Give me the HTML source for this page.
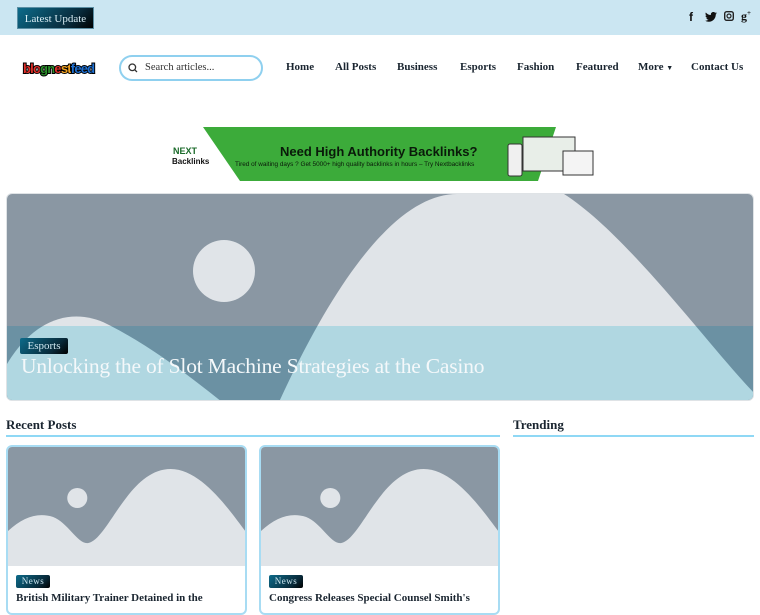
<!DOCTYPE html>
<html><head><meta charset="utf-8"><style>
*{margin:0;padding:0;box-sizing:border-box}
body{width:760px;height:600px;overflow:hidden;background:#fff;font-family:"Liberation Serif","DejaVu Serif",serif;color:#1a2530;position:relative}
.top{position:absolute;left:0;top:0;width:760px;height:35px;background:#cbe6f2}
.lu{position:absolute;left:17px;top:7px;width:77px;height:22px;background:linear-gradient(135deg,#0d6b8a,#082a3a 70%,#000);color:#d9eef5;font-size:11px;line-height:22px;text-align:center;border:1px solid #5a8ea3}
.soc{position:absolute;top:10px;font-size:12px;font-weight:bold;color:#111}
.logo{position:absolute;left:23px;top:61px;font-family:"Liberation Sans",sans-serif;font-weight:bold;font-size:13px;letter-spacing:-0.8px;-webkit-text-stroke:2px #000;paint-order:stroke fill}
.search{position:absolute;left:119px;top:55px;width:144px;height:26px;border:2px solid #8fd0ef;border-radius:13px;font-size:10.5px;color:#333;padding-left:24px;line-height:22px}
.nav{position:absolute;top:61px;font-size:11px;font-weight:bold;color:#1a2530}
.ad{position:absolute;left:168px;top:127px;width:428px;height:56px}
.hero{position:absolute;left:6px;top:193px;width:748px;height:208px;border-radius:6px;overflow:hidden;border:1px solid #dfe3e6}
.tag{position:absolute;background:linear-gradient(135deg,#0d6b8a,#082a3a 70%,#000);color:#cfe8f1;border-radius:2px;text-align:center}
.h{position:absolute;font-size:13px;font-weight:bold}
.line{position:absolute;height:2px;background:#8fd8f5}
.card{position:absolute;top:445px;width:241px;height:170px;border:2px solid #a8dcf3;border-radius:6px;overflow:hidden}
.ct{position:absolute;left:8px;top:145px;font-size:11px;font-weight:bold;white-space:nowrap}
</style></head><body>
<div class="top"></div>
<div class="lu">Latest Update</div>
<div class="soc" style="left:689px;font-family:'Liberation Sans',sans-serif">f</div>
<svg style="position:absolute;left:705px;top:12px" width="12" height="10" viewBox="0 0 24 20"><path d="M24 2.4a10 10 0 0 1-2.8.8A5 5 0 0 0 23.3.4a10 10 0 0 1-3.1 1.2A4.9 4.9 0 0 0 11.8 6 14 14 0 0 1 1.7.9a4.9 4.9 0 0 0 1.5 6.6A5 5 0 0 1 1 6.9 4.9 4.9 0 0 0 4.9 11.8a5 5 0 0 1-2.2.1 4.9 4.9 0 0 0 4.6 3.4A9.9 9.9 0 0 1 0 17.3 14 14 0 0 0 7.5 19.5c9 0 14-7.5 14-14v-.6A10 10 0 0 0 24 2.4z" fill="#111"/></svg>
<svg style="position:absolute;left:724px;top:11px" width="10" height="10" viewBox="0 0 10 10"><rect x="0.7" y="0.7" width="8.6" height="8.6" rx="2" fill="none" stroke="#222" stroke-width="1.4"/><circle cx="5" cy="5" r="2" fill="none" stroke="#222" stroke-width="1.2"/></svg>
<div class="soc" style="left:741px;top:9px;font-size:12px">g<sup style="font-size:7px">+</sup></div>

<div class="logo"><span style="color:#e0302a">blo</span><span style="color:#2b8f2b">gn</span><span style="color:#e0302a">e</span><span style="color:#f0a020">st</span><span style="color:#1e6fd0">feed</span></div>
<div class="search"><svg style="position:absolute;left:7px;top:6px" width="10" height="10" viewBox="0 0 10 10"><circle cx="4.3" cy="4.3" r="3.3" fill="none" stroke="#333" stroke-width="1.3"/><path d="M6.8 6.8L9 9" stroke="#333" stroke-width="1.3"/></svg>Search articles...</div>
<div class="nav" style="left:286px">Home</div>
<div class="nav" style="left:335px">All Posts</div>
<div class="nav" style="left:397px">Business</div>
<div class="nav" style="left:460px">Esports</div>
<div class="nav" style="left:517px">Fashion</div>
<div class="nav" style="left:576px">Featured</div>
<div class="nav" style="left:638px">More <span style="font-size:7px">▼</span></div>
<div class="nav" style="left:691px">Contact Us</div>

<div class="ad">
<svg width="428" height="56" viewBox="0 0 428 56"><polygon points="35,0 388,0 370,54 72,54 " fill="#3cab3a"/>
<text x="5" y="27" font-family="Liberation Sans" font-weight="bold" font-size="9" fill="#1a6a2a">NEXT</text>
<text x="4" y="37" font-family="Liberation Sans" font-weight="bold" font-size="8" fill="#111">Backlinks</text>
<text x="112" y="29" font-family="Liberation Sans" font-weight="bold" font-size="13" fill="#0a1a0a">Need High Authority Backlinks?</text>
<text x="67" y="39" font-family="Liberation Sans" font-size="6.4" fill="#0a1a0a">Tired of waiting days ? Get 5000+ high quality backlinks in hours – Try Nextbacklinks</text>
<rect x="355" y="10" width="52" height="34" fill="#e8eee8" stroke="#333"/><rect x="395" y="24" width="30" height="24" fill="#f4f4f4" stroke="#333"/><rect x="340" y="17" width="14" height="32" rx="2" fill="#f0f0f0" stroke="#333"/></svg>
</div>

<div class="hero">
<svg width="748" height="208" viewBox="0 0 748 208">
<defs><clipPath id="b"><rect x="0" y="132" width="748" height="80"/></clipPath></defs>
<rect width="748" height="208" fill="#8a97a3"/>
<circle cx="217" cy="77" r="31" fill="#e0e4e8"/>
<path d="M272 208 C340 60 400 0 450 0 L557 0 C620 40 700 150 748 200 L748 208 Z" fill="#e0e4e8"/>
<path d="M0 170 C30 120 70 115 100 130 C140 150 180 180 215 208 L0 208 Z" fill="#e0e4e8"/>
<g clip-path="url(#b)">
<rect width="748" height="208" fill="#6b91a3"/>
<path d="M272 208 C340 60 400 0 450 0 L557 0 C620 40 700 150 748 200 L748 208 Z" fill="#b0d7e1"/>
<path d="M0 170 C30 120 70 115 100 130 C140 150 180 180 215 208 L0 208 Z" fill="#b0d7e1"/>
</g>
</svg>
<div class="tag" style="left:13px;top:144px;width:48px;height:16px;font-size:11px;line-height:16px">Esports</div>
<div style="position:absolute;left:14px;top:160px;color:#f4f8fa;font-size:21.5px;letter-spacing:-0.2px;white-space:nowrap">Unlocking the of Slot Machine Strategies at the Casino</div>
</div>

<div class="h" style="left:6px;top:417px">Recent Posts</div>
<div class="line" style="left:6px;top:435px;width:494px"></div>
<div class="h" style="left:513px;top:417px">Trending</div>
<div class="line" style="left:513px;top:435px;width:241px"></div>

<div class="card" style="left:6px">
<svg width="241" height="119" viewBox="0 0 240 119" preserveAspectRatio="none"><rect width="240" height="119" fill="#8a97a3"/><circle cx="69" cy="51" r="10" fill="#e0e4e8"/><path d="M0 84 C15 70 30 65 45 70 C60 76 70 98 80 96 C100 92 120 22 162 22 C195 22 225 70 240 89 L240 119 L0 119 Z" fill="#e0e4e8"/></svg>
<div class="tag" style="left:8px;top:128px;width:34px;height:13px;font-size:9px;line-height:13px;letter-spacing:.5px">News</div>
<div class="ct">British Military Trainer Detained in the</div>
</div>
<div class="card" style="left:259px">
<svg width="241" height="119" viewBox="0 0 240 119" preserveAspectRatio="none"><rect width="240" height="119" fill="#8a97a3"/><circle cx="69" cy="51" r="10" fill="#e0e4e8"/><path d="M0 84 C15 70 30 65 45 70 C60 76 70 98 80 96 C100 92 120 22 162 22 C195 22 225 70 240 89 L240 119 L0 119 Z" fill="#e0e4e8"/></svg>
<div class="tag" style="left:8px;top:128px;width:34px;height:13px;font-size:9px;line-height:13px;letter-spacing:.5px">News</div>
<div class="ct">Congress Releases Special Counsel Smith's</div>
</div>
</body></html>
